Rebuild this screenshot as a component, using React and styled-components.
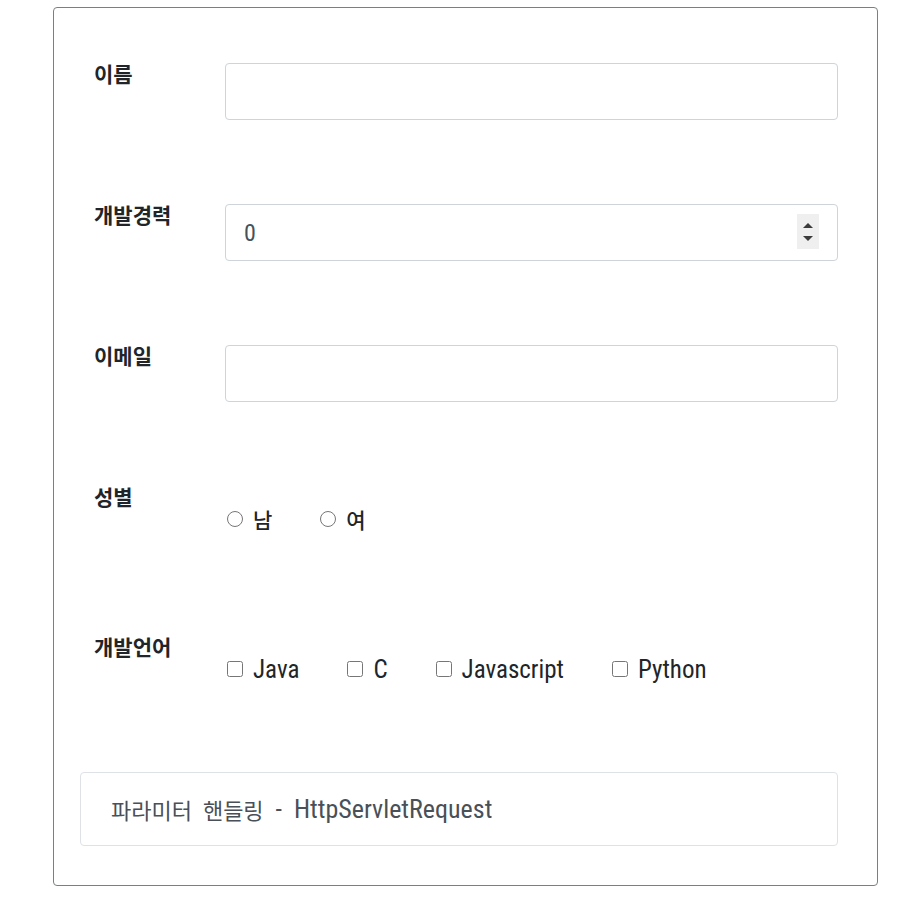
import React from 'react';
import styled, { createGlobalStyle } from 'styled-components';

const GlobalStyle = createGlobalStyle`
  body {
    margin: 0;
    background: #fff;
    font-family: "Roboto Condensed", "Noto Sans CJK KR", sans-serif;
    color: #212529;
  }
`;

const Page = styled.div`
  padding: 7px 20px 15px 53px;
`;

const Card = styled.form`
  width: 825px;
  box-sizing: border-box;
  border: 1px solid #7a7f85;
  border-radius: 4px;
  padding: 55px 39px 39px 26px;
`;

const Row = styled.div`
  display: flex;
  align-items: flex-start;
  padding-left: 14px;
  margin-bottom: ${p => p.gap || 84}px;
`;

const Label = styled.label`
  width: 131px;
  flex-shrink: 0;
  font-family: "Noto Sans CJK KR", sans-serif;
  font-weight: 700;
  font-size: 21px;
  line-height: 20px;
  color: #212529;
`;

const Field = styled.div`
  position: relative;
  flex: 1;
  display: flex;
`;

const Input = styled.input`
  flex: 1;
  height: 57px;
  box-sizing: border-box;
  border: 1px solid #ced4da;
  border-radius: 4px;
  padding: 0 18px 0 18px;
  font-family: "Roboto Condensed", sans-serif;
  font-size: 24px;
  color: #495057;
  outline: none;
  -moz-appearance: textfield;
  &::-webkit-inner-spin-button,
  &::-webkit-outer-spin-button {
    -webkit-appearance: none;
    margin: 0;
  }
`;

const Spinner = styled.div`
  position: absolute;
  right: 19px;
  top: 10px;
  width: 22px;
  height: 35px;
  background: #efefef;
  display: flex;
  flex-direction: column;
  align-items: center;
  justify-content: center;
  gap: 8px;
`;

const Arrow = styled.span`
  width: 0;
  height: 0;
  border-left: 5px solid transparent;
  border-right: 5px solid transparent;
  ${p => p.down
    ? 'border-top: 5px solid #3b3b3b;'
    : 'border-bottom: 5px solid #3b3b3b;'}
`;

const Options = styled.div`
  display: flex;
  align-items: center;
  gap: ${p => p.gap || 46}px;
  height: 66px;
`;

const Option = styled.label`
  display: flex;
  align-items: center;
  gap: 10px;
  font-family: "Roboto Condensed", "Noto Sans CJK KR", sans-serif;
  font-size: 25px;
  color: #212529;
  input {
    margin: 0 0 0 2px;
    width: 16px;
    height: 16px;
  }
`;

const Hangul = styled.span`
  font-family: "Noto Sans CJK KR", sans-serif;
  font-size: 21px;
  font-weight: 500;
`;

const Footer = styled.div`
  border: 1px solid #dee2e6;
  border-radius: 4px;
  height: 74px;
  box-sizing: border-box;
  display: flex;
  align-items: center;
  padding: 0 30px;
  font-size: 26px;
  color: #495057;
  white-space: pre;
`;

const KoText = styled.span`
  font-family: "Noto Sans CJK KR", sans-serif;
  font-size: 22px;
  word-spacing: 6px;
`;

export default function App() {
  const langs = ['Java', 'C', 'Javascript', 'Python'];
  return (
    <Page>
      <GlobalStyle />
      <Card onSubmit={e => e.preventDefault()}>
        <Row>
          <Label>이름</Label>
          <Field>
            <Input type="text" />
          </Field>
        </Row>
        <Row>
          <Label>개발경력</Label>
          <Field>
            <Input type="number" defaultValue={0} />
            <Spinner>
              <Arrow />
              <Arrow down />
            </Spinner>
          </Field>
        </Row>
        <Row>
          <Label>이메일</Label>
          <Field>
            <Input type="email" />
          </Field>
        </Row>
        <Row>
          <Label>성별</Label>
          <Options gap={46}>
            <Option><input type="radio" name="gender" /><Hangul>남</Hangul></Option>
            <Option><input type="radio" name="gender" /><Hangul>여</Hangul></Option>
          </Options>
        </Row>
        <Row gap={70}>
          <Label>개발언어</Label>
          <Options>
            {langs.map(l => (
              <Option key={l}><input type="checkbox" />{l}</Option>
            ))}
          </Options>
        </Row>
        <Footer>
          <KoText>파라미터 핸들링</KoText>{'  -  HttpServletRequest'}
        </Footer>
      </Card>
    </Page>
  );
}
